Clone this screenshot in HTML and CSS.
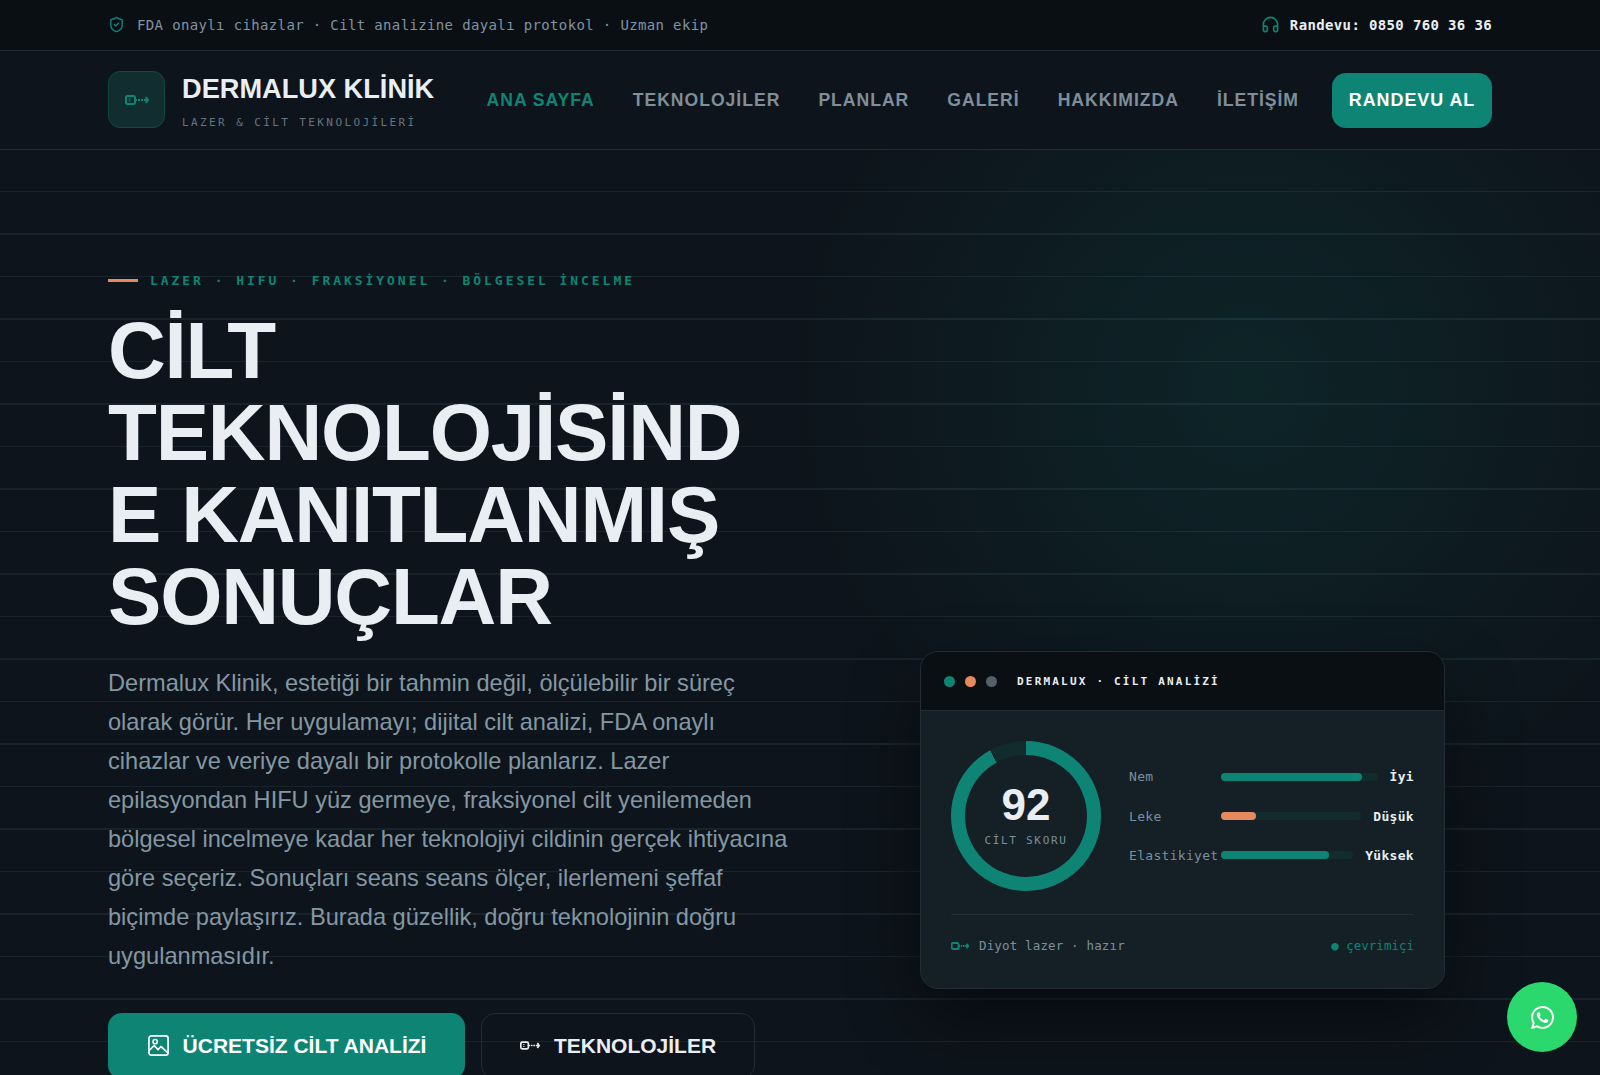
FILE: index.html
```html
<!DOCTYPE html>
<html lang="tr">
<head>
<meta charset="utf-8">
<title>Dermalux Klinik</title>
<link rel="stylesheet" href="styles.css">
</head>
<body>
<div class="topbar">
  <div class="topbar-left">
    <svg class="top-icon" viewBox="0 0 24 24"><path d="M20 13c0 5-3.500 7.500-7.660 8.950a1 1 0 0 1-.67-.01C7.500 20.500 4 18 4 13V6a1 1 0 0 1 1-1c2 0 4.500-1.200 6.240-2.720a1.170 1.170 0 0 1 1.520 0C14.510 3.810 17 5 19 5a1 1 0 0 1 1 1z"/><path d="m9 12 2 2 4-4"/></svg>
    <span>FDA onaylı cihazlar · Cilt analizine dayalı protokol · Uzman ekip</span>
  </div>
  <div class="topbar-right">
    <svg class="top-icon head" viewBox="0 0 24 24"><path d="M3 14h3a2 2 0 0 1 2 2v3a2 2 0 0 1-2 2H5a2 2 0 0 1-2-2v-7a9 9 0 0 1 18 0v7a2 2 0 0 1-2 2h-1a2 2 0 0 1-2-2v-3a2 2 0 0 1 2-2h3"/></svg>
    <strong>Randevu: 0850 760 36 36</strong>
  </div>
</div>

<header class="nav">
  <a class="brand" href="#">
    <span class="logo">
      <svg class="laser laser-logo" viewBox="0 0 24 10"><rect x="1" y="1" width="9" height="8" rx="1.500"/><path d="M4.500 3.500v1M4.500 5.500v1M10 5h2M13 5h2M16 5h2M19 5h3M20.800 2 23 5l-2.200 3"/></svg>
    </span>
    <span class="brand-text">
      <span class="brand-name">DERMALUX KLİNİK</span>
      <span class="brand-sub">LAZER &amp; CİLT TEKNOLOJİLERİ</span>
    </span>
  </a>
  <nav class="menu">
    <a class="active" href="#">ANA SAYFA</a>
    <a href="#">TEKNOLOJİLER</a>
    <a href="#">PLANLAR</a>
    <a href="#">GALERİ</a>
    <a href="#">HAKKIMIZDA</a>
    <a href="#">İLETİŞİM</a>
    <a class="cta" href="#">RANDEVU AL</a>
  </nav>
</header>

<main class="hero">
  <div class="hero-left">
    <div class="eyebrow"><span class="eyebrow-line"></span><span>LAZER · HIFU · FRAKSİYONEL · BÖLGESEL İNCELME</span></div>
    <h1>CİLT TEKNOLOJİSİNDE KANITLANMIŞ SONUÇLAR</h1>
    <p>Dermalux Klinik, estetiği bir tahmin değil, ölçülebilir bir süreç olarak görür. Her uygulamayı; dijital cilt analizi, FDA onaylı cihazlar ve veriye dayalı bir protokolle planlarız. Lazer epilasyondan HIFU yüz germeye, fraksiyonel cilt yenilemeden bölgesel incelmeye kadar her teknolojiyi cildinin gerçek ihtiyacına göre seçeriz. Sonuçları seans seans ölçer, ilerlemeni şeffaf biçimde paylaşırız. Burada güzellik, doğru teknolojinin doğru uygulanmasıdır.</p>
    <div class="actions">
      <a class="btn btn-primary" href="#">
        <svg class="btn-icon" viewBox="0 0 24 24"><rect x="2" y="2" width="20" height="20" rx="2.500"/><circle cx="8.500" cy="8" r="2.200"/><path d="m2 17.500 5.500-5.500 4 4.500 3-3.500 7.500 7"/></svg>
        ÜCRETSİZ CİLT ANALİZİ
      </a>
      <a class="btn btn-ghost" href="#">
        <svg class="laser laser-btn" viewBox="0 0 24 10"><rect x="1" y="1" width="9" height="8" rx="1.500"/><path d="M4.500 3.500v1M4.500 5.500v1M10 5h2M13 5h2M16 5h2M19 5h3M20.800 2 23 5l-2.200 3"/></svg>
        TEKNOLOJİLER
      </a>
    </div>
  </div>

  <aside class="card">
    <div class="card-head">
      <span class="dot dot-teal"></span><span class="dot dot-orange"></span><span class="dot dot-grey"></span>
      <span class="card-title">DERMALUX · CİLT ANALİZİ</span>
    </div>
    <div class="card-body">
      <div class="analysis">
        <div class="ring">
          <div class="ring-inner">
            <span class="score">92</span>
            <span class="score-label">CİLT SKORU</span>
          </div>
        </div>
        <div class="metrics">
          <div class="metric">
            <span class="metric-label">Nem</span>
            <span class="track"><span class="fill" style="width:90%"></span></span>
            <span class="metric-value">İyi</span>
          </div>
          <div class="metric">
            <span class="metric-label">Leke</span>
            <span class="track"><span class="fill fill-orange" style="width:25%"></span></span>
            <span class="metric-value">Düşük</span>
          </div>
          <div class="metric">
            <span class="metric-label">Elastikiyet</span>
            <span class="track"><span class="fill" style="width:82%"></span></span>
            <span class="metric-value">Yüksek</span>
          </div>
        </div>
      </div>
      <div class="card-foot">
        <span class="foot-left">
          <svg class="laser laser-foot" viewBox="0 0 24 10"><rect x="1" y="1" width="9" height="8" rx="1.500"/><path d="M10 5h2M13 5h2M16 5h2M19 5h3M20.800 2 23 5l-2.200 3"/></svg>
          Diyot lazer · hazır
        </span>
        <span class="online">● çevrimiçi</span>
      </div>
    </div>
  </aside>
</main>

<a class="whatsapp" href="#" aria-label="WhatsApp">
  <svg viewBox="0 0 24 24"><path d="M17.472 14.382c-.297-.149-1.758-.867-2.030-.967-.273-.099-.471-.148-.670.150-.197.297-.767.966-.940 1.164-.173.199-.347.223-.644.075-.297-.150-1.255-.463-2.390-1.475-.883-.788-1.480-1.761-1.653-2.059-.173-.297-.018-.458.130-.606.134-.133.298-.347.446-.520.149-.174.198-.298.298-.497.099-.198.050-.371-.025-.520-.075-.149-.669-1.612-.916-2.207-.242-.579-.487-.500-.669-.510-.173-.008-.371-.010-.570-.010-.198 0-.520.074-.792.372-.272.297-1.040 1.016-1.040 2.479 0 1.462 1.065 2.875 1.213 3.074.149.198 2.096 3.200 5.077 4.487.709.306 1.262.489 1.694.625.712.227 1.360.195 1.871.118.571-.085 1.758-.719 2.006-1.413.248-.694.248-1.289.173-1.413-.074-.124-.272-.198-.570-.347m-5.421 7.403h-.004a9.870 9.870 0 01-5.031-1.378l-.361-.214-3.741.982.998-3.648-.235-.374a9.860 9.860 0 01-1.510-5.260c.001-5.450 4.436-9.884 9.888-9.884 2.640 0 5.122 1.030 6.988 2.898a9.825 9.825 0 012.893 6.994c-.003 5.450-4.437 9.884-9.885 9.884m8.413-18.297A11.815 11.815 0 0012.050 0C5.495 0 .160 5.335.157 11.892c0 2.096.547 4.142 1.588 5.945L.057 24l6.305-1.654a11.882 11.882 0 005.683 1.448h.005c6.554 0 11.890-5.335 11.893-11.893a11.821 11.821 0 00-3.480-8.413Z"/></svg>
</a>
</body>
</html>
```
FILE: styles.css
```css
* { box-sizing: border-box; }
html, body { margin: 0; height: 100%; overflow: hidden; }
body {
  background: #0d141b;
  color: #e8eef2;
  font-family: "Liberation Sans", Arial, sans-serif;
}
a { text-decoration: none; color: inherit; }

.topbar {
  height: 51px;
  padding: 0 108px 1px;
  background: #0a0f14;
  border-bottom: 1px solid #222d35;
  display: flex;
  align-items: center;
  justify-content: space-between;
  font: 14px "DejaVu Sans Mono", monospace;
  letter-spacing: .36px;
}
.topbar-left { display: flex; align-items: center; gap: 12px; color: #7f93a3; }
.topbar-right { display: flex; align-items: center; gap: 10px; color: #e8eef2; }
.top-icon { width: 17px; height: 17px; fill: none; stroke: #0e8574; stroke-width: 2; stroke-linecap: round; stroke-linejoin: round; }
.top-icon.head { width: 19px; height: 19px; }

.nav {
  height: 99px;
  padding: 0 108px 1px;
  background: #0d141b;
  border-bottom: 1px solid #222d35;
  display: flex;
  align-items: center;
  justify-content: space-between;
}
.brand { display: flex; align-items: center; gap: 17px; }
.logo {
  width: 57px; height: 57px;
  border-radius: 12px;
  background: #122d30;
  border: 1px solid #11493f;
  display: flex; align-items: center; justify-content: center;
}
.laser { fill: none; stroke: #0e8574; stroke-width: 2; }
.laser-logo { width: 24px; height: 10px; }
.laser-btn { width: 20px; height: 9px; stroke: #e8eef2; }
.laser-foot { width: 18px; height: 8px; stroke-width: 2.400; }
.brand-text { display: flex; flex-direction: column; gap: 12px; padding-top: 3px; }
.brand-name { font-size: 27.200px; font-weight: 700; line-height: 31px; color: #e8eef2; }
.brand-sub { font: 11px/13px "DejaVu Sans Mono", monospace; letter-spacing: 2.400px; color: #66747e; }

.menu { display: flex; align-items: center; gap: 38px; margin-top: 2px; font-size: 17.600px; font-weight: 700; letter-spacing: .98px; color: #7f8e99; }
.menu .active { color: #0e8574; }
.menu .cta {
  margin-left: -5px;
  background: #0e8574;
  color: #fff;
  height: 55px;
  width: 160px;
  border-radius: 14px;
  font-size: 17.900px;
  display: flex; align-items: center; justify-content: center;
}

.hero {
  height: calc(100vh - 150px);
  padding: 120px 155px 0 108px;
  display: grid;
  grid-template-columns: 680px 525px;
  justify-content: space-between;
  background:
    repeating-linear-gradient(to bottom, rgba(0,0,0,0) 0, rgba(0,0,0,0) 41px, rgba(100,140,160,.12) 41px, rgba(100,140,160,.12) 42.500px),
    radial-gradient(circle 470px at 1249px 237px, rgba(16,138,120,.14), rgba(16,138,120,0) 100%);
}
.hero-left { min-width: 0; }
.eyebrow { display: flex; align-items: center; gap: 12px; height: 20px; font: 700 13px "DejaVu Sans Mono", monospace; letter-spacing: 2.950px; color: #0e8574; }
.eyebrow-line { width: 30px; height: 3px; margin-top: 1px; background: #e58a5f; }
h1 {
  margin: 20px 0 0;
  font-size: 80px;
  line-height: 82px;
  font-weight: 700;
  letter-spacing: -1.200px;
  color: #e8eef2;
  overflow-wrap: anywhere;
}
.hero-left p {
  margin: 26px 0 0;
  font-size: 23.600px;
  line-height: 39.070px;
  color: #8497a3;
}
.actions { display: flex; gap: 16px; margin-top: 36px; }
.btn {
  height: 66px;
  border-radius: 14px;
  display: flex; align-items: center; justify-content: center; gap: 14px;
  font-size: 21px; font-weight: 700;
  color: #e8eef2;
}
.btn-primary { width: 357px; background: #0e8574; color: #fff; gap: 13px; }
.btn-ghost { width: 274px; border: 1px solid #222d35; }
.btn-icon { width: 23px; height: 23px; fill: none; stroke: #fff; stroke-width: 1.700; stroke-linecap: round; stroke-linejoin: round; }

.card {
  margin-top: 381px;
  height: 338px;
  border: 1px solid #222d35;
  border-radius: 18px;
  overflow: hidden;
  background: #141f26;
  box-shadow: 0 30px 70px rgba(0,0,0,.45);
}
.card-head {
  height: 59px;
  background: #0a0f14;
  border-bottom: 1px solid #222d35;
  display: flex; align-items: center;
  padding-left: 23px;
  gap: 10px;
}
.dot { width: 11px; height: 11px; border-radius: 50%; }
.dot-teal { background: #0e8574; }
.dot-orange { background: #e58a5f; }
.dot-grey { background: #545f66; }
.card-title { margin-left: 10px; font: 700 11px "DejaVu Sans Mono", monospace; letter-spacing: 2.200px; color: #e8eef2; }
.card-body { padding: 30px 30px 0; }
.analysis { display: flex; align-items: center; gap: 28px; }
.ring {
  flex: none;
  width: 150px; height: 150px;
  border-radius: 50%;
  background: conic-gradient(#0e8574 0 92%, #122c2e 92% 100%);
  padding: 14px;
}
.ring-inner {
  height: 100%;
  border-radius: 50%;
  background: #141f26;
  display: flex; flex-direction: column; align-items: center; justify-content: center;
  padding-bottom: 5px;
}
.score { font-size: 44px; font-weight: 700; line-height: 50px; color: #e8eef2; }
.score-label { margin-top: 4px; font: 11px/14px "DejaVu Sans Mono", monospace; letter-spacing: 1.700px; color: #7d8f9c; }
.metrics { flex: 1; display: flex; flex-direction: column; gap: 19.300px; }
.metric { display: flex; align-items: center; gap: 12px; height: 20px; font: 13px "DejaVu Sans Mono", monospace; letter-spacing: .3px; }
.metric-label { flex: none; width: 80px; color: #7d8f9c; white-space: nowrap; }
.track { flex: 1; height: 8px; border-radius: 4px; background: #122c2e; }
.fill { display: block; height: 100%; border-radius: 4px; background: #0e8574; }
.fill-orange { background: #e58a5f; }
.metric-value { font-weight: 700; color: #e8eef2; }
.card-foot {
  margin-top: 23px;
  border-top: 1px solid #222d35;
  padding-top: 22px;
  display: flex; justify-content: space-between;
  font: 12.500px/18px "DejaVu Sans Mono", monospace;
}
.foot-left { display: flex; align-items: center; gap: 10px; color: #7d8f9c; letter-spacing: .15px; }
.online { color: #0e8574; }

.whatsapp {
  position: fixed; right: 23px; bottom: 23px;
  width: 70px; height: 70px; border-radius: 50%;
  background: #2bd86e;
  display: flex; align-items: center; justify-content: center;
}
.whatsapp svg { width: 23px; height: 23px; fill: #fff; }
```
